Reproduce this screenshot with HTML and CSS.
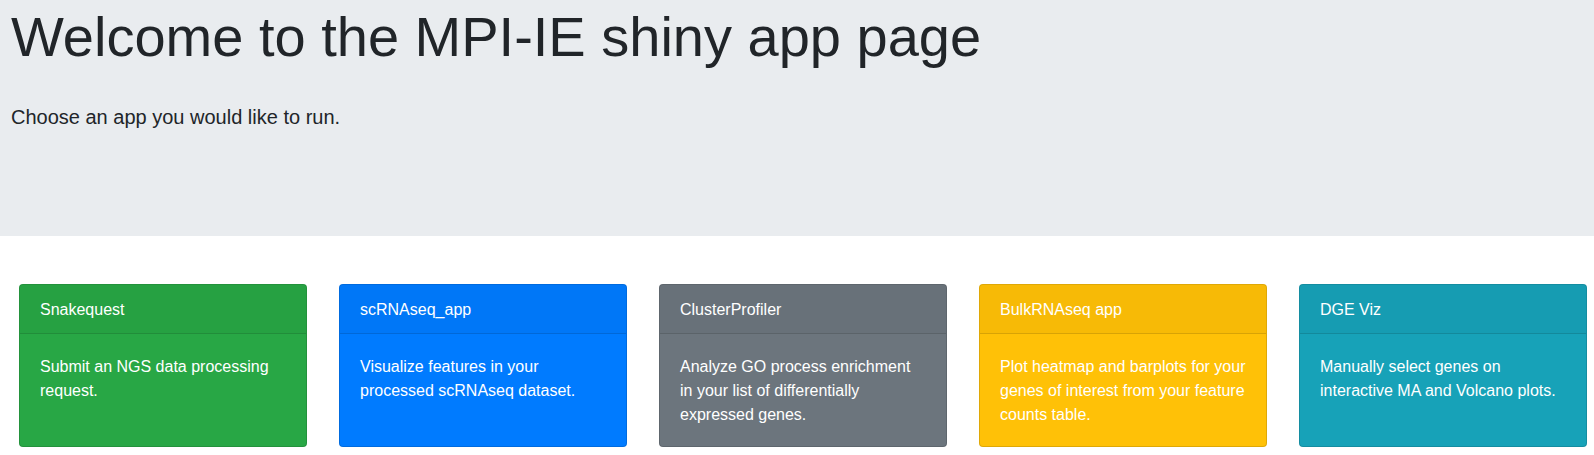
FILE: index.html
```html
<!DOCTYPE html>
<html lang="en">
<head>
<meta charset="utf-8">
<title>MPI-IE shiny apps</title>
<link rel="stylesheet" href="styles.css">
</head>
<body>
<header class="jumbotron">
  <h1 class="title">Welcome to the MPI-IE shiny app page</h1>
  <p class="lead">Choose an app you would like to run.</p>
</header>
<main class="deck">
  <article class="card success">
    <h2 class="card-header">Snakequest</h2>
    <p class="card-body">Submit an NGS data processing request.</p>
  </article>
  <article class="card primary">
    <h2 class="card-header">scRNAseq_app</h2>
    <p class="card-body">Visualize features in your processed scRNAseq dataset.</p>
  </article>
  <article class="card secondary">
    <h2 class="card-header">ClusterProfiler</h2>
    <p class="card-body">Analyze GO process enrichment in your list of differentially expressed genes.</p>
  </article>
  <article class="card warning">
    <h2 class="card-header">BulkRNAseq app</h2>
    <p class="card-body">Plot heatmap and barplots for your genes of interest from your feature counts table.</p>
  </article>
  <article class="card info">
    <h2 class="card-header">DGE Viz</h2>
    <p class="card-body">Manually select genes on interactive MA and Volcano plots.</p>
  </article>
</main>
</body>
</html>
```
FILE: styles.css
```css
*, *::before, *::after { box-sizing: border-box; }

body {
  margin: 0;
  background: #fff;
  color: #212529;
  font-family: "Liberation Sans", Arial, sans-serif;
  font-size: 16px;
  line-height: 24px;
}

.jumbotron {
  padding: 4px 11px 104px;
  background: #e9ecef;
}

.title {
  margin: 0 0 32px;
  font-size: 56px;
  font-weight: 400;
  line-height: 66px;
}

.lead {
  margin: 0;
  font-size: 20px;
  line-height: 30px;
}

.deck {
  display: grid;
  grid-template-columns: repeat(5, 1fr);
  gap: 32px;
  padding: 48px 7px 8px 19px;
}

.card {
  border: 1px solid rgba(0, 0, 0, 0.125);
  border-radius: 4px;
  color: #fff;
}

.card-header {
  margin: 0;
  padding: 13px 20px 11px;
  border-bottom: 1px solid rgba(0, 0, 0, 0.125);
  border-radius: 3px 3px 0 0;
  background: rgba(0, 0, 0, 0.03);
  font-size: 16px;
  font-weight: 400;
}

.card-body {
  margin: 0;
  padding: 21px 20px 19px;
}

.success { background-color: #28a745; }
.primary { background-color: #007bff; }
.secondary { background-color: #6c757d; }
.warning { background-color: #ffc107; }
.info { background-color: #17a2b8; }
```
